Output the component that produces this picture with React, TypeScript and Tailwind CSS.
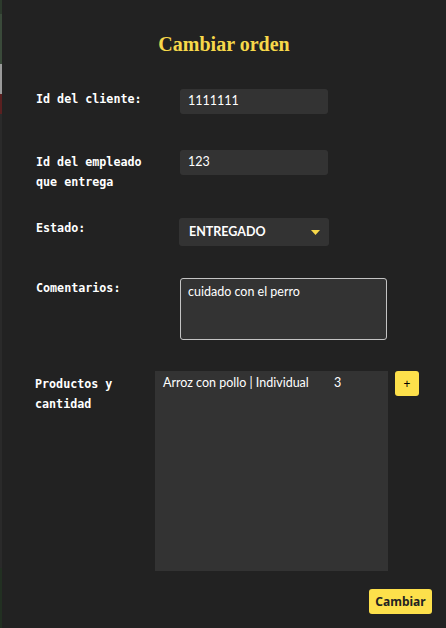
import { FC, ReactNode } from 'react'

const label = "font-['DejaVu_Sans_Mono',monospace] font-bold text-[11.7px] leading-[20px] text-white"
const field = "font-['Lato','Noto_Sans',sans-serif] text-[12.5px] text-white bg-[#333] rounded-[3px]"

const Row: FC<{ title: string; top: string; children: ReactNode; labelClass?: string }> = ({ title, top, children, labelClass = 'w-[144px]' }) => (
  <div className={`flex items-start ${top}`}>
    <div className={`${labelClass} shrink-0 ${label}`}>{title}</div>
    {children}
  </div>
)

export default function App() {
  return (
    <div className="flex h-[628px] w-full bg-[#222]">
      {/* bit of the page behind the modal */}
      <div className="flex w-[2px] shrink-0 flex-col">
        <div className="h-[14px] bg-[#2c3a2c]" />
        <div className="h-[50px] bg-[#3a4a3a]" />
        <div className="h-[30px] bg-[#9a9a9a]" />
        <div className="h-[20px] bg-[#5a2020]" />
        <div className="flex-1 bg-[#2a2a2a]" />
        <div className="h-[60px] bg-[#223022]" />
      </div>

      <div className="flex flex-1 flex-col pl-[34px]">
        <h1 className="mt-[31px] -ml-[34px] text-center font-['Liberation_Serif',serif] text-[20px] font-bold leading-[26px] text-[#f7d84a]">
          Cambiar orden
        </h1>

        <Row title="Id del cliente:" top="mt-[32px]">
          <div className={`${field} flex h-[25px] w-[148px] items-center px-[8px]`}>1111111</div>
        </Row>

        <Row title="Id del empleado que entrega" top="mt-[36px]" labelClass="w-[130px] mr-[14px] pt-[2px]">
          <div className={`${field} flex h-[25px] w-[148px] items-center px-[8px]`}>123</div>
        </Row>

        <Row title="Estado:" top="mt-[26px]">
          <div className={`${field} -ml-px flex h-[28px] w-[150px] items-center justify-between pl-[10px] pr-[9px] text-[10.5px] font-bold`}>
            <span>ENTREGADO</span>
            <svg width="9" height="5" viewBox="0 0 9 5"><path d="M0 0H9L4.5 5Z" fill="#f7d84a" /></svg>
          </div>
        </Row>

        <Row title="Comentarios:" top="mt-[32px]">
          <div className={`${field} h-[62px] w-[207px] border border-[#c4c4c4] px-[7px] pt-[4px] leading-[17px]`}>
            cuidado con el perro
          </div>
        </Row>

        <Row title="Productos y cantidad" top="mt-[31px]" labelClass="-ml-px w-[120px] pt-[3px]">
          <div className={`${field} h-[200px] w-[233px] rounded-none px-[8px] pt-[3px] leading-[18px]`}>
            <div className="flex">
              <span className="w-[171px]">Arroz con pollo | Individual</span>
              <span>3</span>
            </div>
          </div>
          <button className="ml-[7px] flex h-[25px] w-[24px] items-center justify-center rounded-[3px] bg-[#fde04b] font-['Noto_Sans',sans-serif] text-[12px] leading-none text-black">
            +
          </button>
        </Row>

        <div className="mt-[18px] flex justify-end pr-[14px]">
          <button className="flex h-[25px] w-[63px] items-center justify-center rounded-[3px] bg-[#fde04b] font-['Noto_Sans',sans-serif] text-[12px] font-bold text-[#222]">
            Cambiar
          </button>
        </div>
      </div>
    </div>
  )
}
